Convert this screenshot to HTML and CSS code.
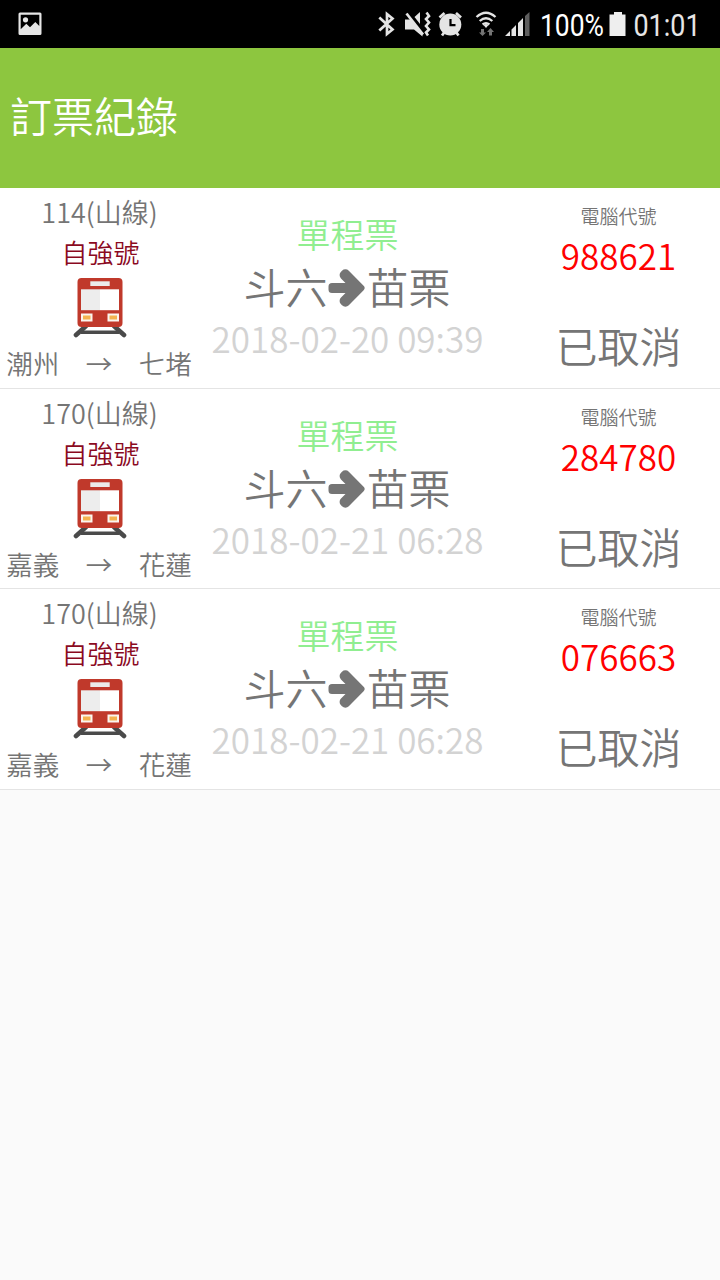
FILE: index.html
```html
<!DOCTYPE html>
<html lang="zh-Hant">
<head>
<meta charset="utf-8">
<title>訂票紀錄</title>
<link rel="stylesheet" href="styles.css">
</head>
<body>
<svg class="defs" aria-hidden="true">
  <symbol id="train" viewBox="0 0 54 60">
    <path d="M13 48 3 57M41 48l10 9" fill="none" stroke="#4a4a4a" stroke-width="4.600" stroke-linecap="round"/>
    <path d="M8 54.200h38" stroke="#4a4a4a" stroke-width="3.400"/>
    <rect x="4.500" y="0" width="45" height="49" rx="4" fill="#c0392b"/>
    <rect x="17.300" y="3.300" width="19.400" height="4.700" fill="#ecebea"/>
    <path d="M8 11.300h19v20.900H8z" fill="#ededed"/>
    <path d="M27 11.300h19v20.900H27z" fill="#fff"/>
    <path d="M8 35.500h11.500v8H8zM34.500 35.500H46v8H34.500z" fill="#fbf5ef"/>
    <path d="M10 37.600h7.500v4H10zM36.500 37.600H44v4h-7.500z" fill="#f4b350"/>
  </symbol>
  <symbol id="arrow" viewBox="0 0 39 42">
    <path d="M4 16h13.500l-4.500-4.500a4.800 4.800 0 0 1 0-6.800l1-1a4.800 4.800 0 0 1 6.800 0L35.600 18.800q2.200 2.200 0 4.400L20.800 38.300a4.800 4.800 0 0 1-6.800 0l-1-1a4.800 4.800 0 0 1 0-6.800l4.500-4.500H4q-3.500 0-3.500-3.500v-3q0-3.500 3.500-3.500z" fill="#757575"/>
  </symbol>
</svg>
<header class="status">
  <svg class="photo" width="24" height="24" viewBox="0 0 24 24"><path fill="#e6e6e6" fill-rule="evenodd" d="M2 .5h20a1.500 1.500 0 0 1 1.500 1.500v19.500A1.500 1.500 0 0 1 22 23H2A1.500 1.500 0 0 1 .5 21.500V2A1.500 1.500 0 0 1 2 .5zM2.700 2.700v14.500l5.600-5.500 3.700 3.500 5.300-5.200 4 4V2.700z"/><circle cx="7.500" cy="7.800" r="2.600" fill="#e6e6e6"/></svg>
  <svg width="180" height="48" viewBox="370 0 180 48" class="signals">
    <g fill="none" stroke="#e4e4e4" stroke-width="2.700">
      <path d="M379.300 17.500 392.500 29.500 387 34V14l5.500 4.500L379.300 30.500"/>
      <path d="m426.500 12.500 2.500 3.500-3 3 3 3.500-3 3.500 3 3.500-3 3 2 3" stroke-width="2.600"/>
      <path d="M406.500 13.500 423 34.500"/>
      <path d="m439.500 17.500 5-4.500M456 13l5 4.500M444.500 32l-2.500 3.500M456 32l2.500 3.500"/>
      <path d="M476.500 17q9.500-8.500 19 0M479.700 21q6.300-5.400 12.600 0M482.600 24.500q3.400-2.800 6.800 0" stroke-width="2.300"/>
    </g>
    <path fill="#e4e4e4" d="M405 19.500h6l11.500 13v4l-8.500-7H405zM414.500 17l5.500-5v12zM483.500 25q2.500-2 5 0l-2.500 3z"/>
    <circle cx="450.300" cy="24.500" r="11" fill="#e4e4e4"/>
    <path d="M450.500 19v6.200h5" fill="none" stroke="#000" stroke-width="2.200"/>
    <path fill="#747474" d="M481 29h3v3.500h2l-3.500 3.500-3.500-3.500h2zM489 35.500h3V32h2l-3.500-4-3.500 4h2z"/>
    <path fill="#e4e4e4" d="m505 36 5-5v5zM511.500 29.500l4.500-4.500v11h-4.500zM518 23l5-5v18h-5z"/>
    <path fill="#5e5e5e" d="m525 16 4.500-4v24H525z"/>
  </svg>
  <svg width="170" height="48" viewBox="550 0 170 48" class="power">
    <text x="540" y="35.500" textLength="64" lengthAdjust="spacingAndGlyphs" fill="#fff">100%</text>
    <path fill="#eee" d="M614 12h8v2.500h3.500V36H609.500V14.500h4.500z"/>
    <text x="633.500" y="35.500" textLength="67" lengthAdjust="spacingAndGlyphs" fill="#e6e6e6">01:01</text>
  </svg>
</header>
<div class="toolbar"><h1>訂票紀錄</h1></div>
<main>
  <article class="ticket">
    <section class="train">
      <div class="number">114(山線)</div><div class="kind">自強號</div>
      <svg class="train-icon"><use href="#train"/></svg>
      <div class="line">潮州　→　七堵</div>
    </section>
    <section class="trip">
      <div class="fare">單程票</div>
      <div class="route">斗六<svg class="arrow"><use href="#arrow"/></svg>苗栗</div>
      <div class="date">2018-02-20 09:39</div>
    </section>
    <section class="booking"><div class="label">電腦代號</div><div class="code">988621</div><div class="state">已取消</div></section>
  </article>
  <article class="ticket">
    <section class="train">
      <div class="number">170(山線)</div><div class="kind">自強號</div>
      <svg class="train-icon"><use href="#train"/></svg>
      <div class="line">嘉義　→　花蓮</div>
    </section>
    <section class="trip">
      <div class="fare">單程票</div>
      <div class="route">斗六<svg class="arrow"><use href="#arrow"/></svg>苗栗</div>
      <div class="date">2018-02-21 06:28</div>
    </section>
    <section class="booking"><div class="label">電腦代號</div><div class="code">284780</div><div class="state">已取消</div></section>
  </article>
  <article class="ticket">
    <section class="train">
      <div class="number">170(山線)</div><div class="kind">自強號</div>
      <svg class="train-icon"><use href="#train"/></svg>
      <div class="line">嘉義　→　花蓮</div>
    </section>
    <section class="trip">
      <div class="fare">單程票</div>
      <div class="route">斗六<svg class="arrow"><use href="#arrow"/></svg>苗栗</div>
      <div class="date">2018-02-21 06:28</div>
    </section>
    <section class="booking"><div class="label">電腦代號</div><div class="code">076663</div><div class="state">已取消</div></section>
  </article>
</main>
</body>
</html>
```
FILE: styles.css
```css
* { box-sizing: border-box; }
body {
  margin: 0;
  min-height: 1280px;
  background: #fafafa;
  color: #757575;
  font-family: "Noto Sans CJK TC", sans-serif;
  font-weight: 350;
}
svg { display: block; flex: none; }
.defs { position: absolute; width: 0; height: 0; }
.status { display: flex; height: 48px; background: #000; }
.photo { margin: 12px 0 0 17.5px; }
.signals { margin-left: 328.5px; overflow: visible; }
.power { width: 170px; overflow: visible; font: 400 31px Roboto, sans-serif; }
.toolbar { display: flex; align-items: center; height: 140px; padding: 0 10px 6px; background: #8dc63f; }
h1 { margin: 0; color: #fff; font-size: 42px; font-weight: 350; line-height: 60px; }
.ticket {
  display: grid;
  grid-template-columns: 199px 297px 224px;
  height: 200.5px;
  background: #fff;
  border-bottom: 1px solid #e4e4e4;
  text-align: center;
  white-space: nowrap;
}
.ticket section { display: flex; flex-direction: column; align-items: center; }
.number, .kind { height: 40px; font-size: 26px; line-height: 47px; }
.number { font-size: 27px; }
.kind { color: #8b0a1f; padding-left: 2px; }
.train-icon { width: 54px; height: 60px; margin: 10px 0 0 1px; }
.line { margin: 5px 1px 0 0; font-size: 26.5px; line-height: 40px; }
.ticket .trip { padding: 21px 1px 0 0; }
.fare { color: #90ee90; font-size: 34px; line-height: 50px; padding-left: 1px; }
.route { display: flex; align-items: center; font-size: 42px; line-height: 54px; }
.arrow { width: 39px; height: 42px; margin-top: 4px; }
.date { color: #d3d3d3; font-size: 35px; line-height: 50px; padding-left: 1px; }
.ticket .booking { padding: 14px 0 0 21px; }
.label { font-size: 19px; line-height: 28px; }
.code { color: red; font-size: 35px; line-height: 50px; }
.state { margin-top: 35px; font-size: 42px; line-height: 60px; }
```
